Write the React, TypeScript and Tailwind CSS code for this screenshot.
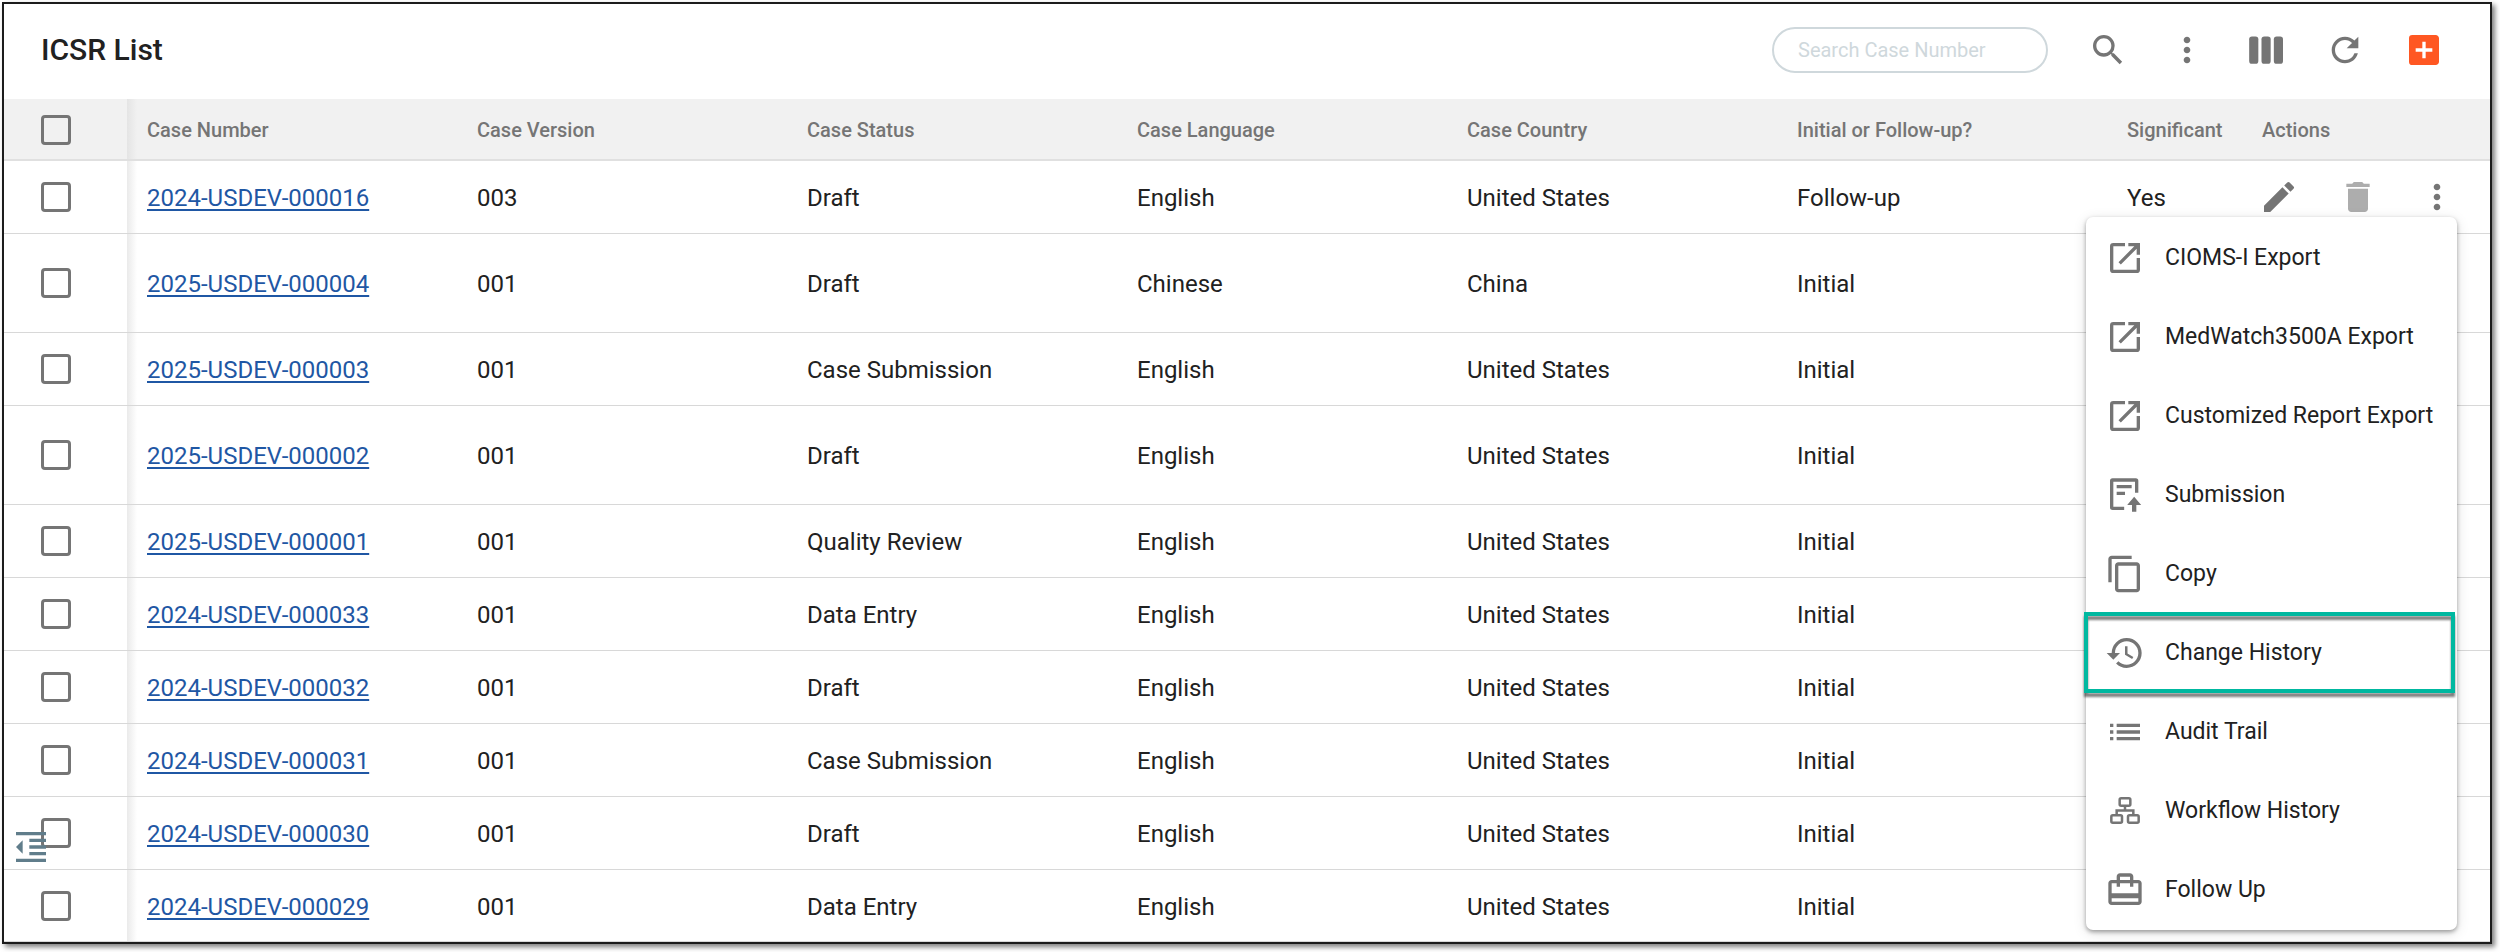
import type { ReactNode } from "react";
import type { IconType } from "react-icons";
import {
  MdAddBox,
  MdCardTravel,
  MdContentCopy,
  MdDelete,
  MdEdit,
  MdFormatIndentDecrease,
  MdHistory,
  MdList,
  MdMoreVert,
  MdRefresh,
  MdSearch,
} from "react-icons/md";

type CaseRow = {
  number: string;
  version: string;
  status: string;
  language: string;
  country: string;
  kind: string;
  height: string;
};

const US = "United States";

const rows: CaseRow[] = [
  { number: "2024-USDEV-000016", version: "003", status: "Draft", language: "English", country: US, kind: "Follow-up", height: "h-[73px]" },
  { number: "2025-USDEV-000004", version: "001", status: "Draft", language: "Chinese", country: "China", kind: "Initial", height: "h-[99px]" },
  { number: "2025-USDEV-000003", version: "001", status: "Case Submission", language: "English", country: US, kind: "Initial", height: "h-[73px]" },
  { number: "2025-USDEV-000002", version: "001", status: "Draft", language: "English", country: US, kind: "Initial", height: "h-[99px]" },
  { number: "2025-USDEV-000001", version: "001", status: "Quality Review", language: "English", country: US, kind: "Initial", height: "h-[73px]" },
  { number: "2024-USDEV-000033", version: "001", status: "Data Entry", language: "English", country: US, kind: "Initial", height: "h-[73px]" },
  { number: "2024-USDEV-000032", version: "001", status: "Draft", language: "English", country: US, kind: "Initial", height: "h-[73px]" },
  { number: "2024-USDEV-000031", version: "001", status: "Case Submission", language: "English", country: US, kind: "Initial", height: "h-[73px]" },
  { number: "2024-USDEV-000030", version: "001", status: "Draft", language: "English", country: US, kind: "Initial", height: "h-[73px]" },
  { number: "2024-USDEV-000029", version: "001", status: "Data Entry", language: "English", country: US, kind: "Initial", height: "h-[72px]" },
];

const headings = ["Case Number", "Case Version", "Case Status", "Case Language", "Case Country", "Initial or Follow-up?"];

function Svg({ className, children }: { className?: string; children: ReactNode }) {
  return (
    <svg viewBox="0 0 24 24" fill="currentColor" aria-hidden="true" className={className}>
      {children}
    </svg>
  );
}

const OpenIcon = ({ className }: { className?: string }) => (
  <Svg className={className}>
    <path d="M12 3H5a2 2 0 0 0-2 2v14a2 2 0 0 0 2 2h14a2 2 0 0 0 2-2v-7h-2v7H5V5h7V3z" />
    <path d="M14 3v2h3.600l-9.500 9.500 1.400 1.400L19 6.400V10h2V3h-7z" />
  </Svg>
);

const ColumnsIcon = ({ className }: { className?: string }) => (
  <Svg className={className}>
    <rect x="1.900" y="3.900" width="5.500" height="16.400" rx="1.700" />
    <rect x="9.300" y="3.900" width="5.500" height="16.400" rx="1.700" />
    <rect x="16.700" y="3.900" width="5.500" height="16.400" rx="1.700" />
  </Svg>
);

const SubmissionIcon = ({ className }: { className?: string }) => (
  <Svg className={className}>
    <path d="M4.500 2A1.500 1.500 0 0 0 3 3.500v16A1.500 1.500 0 0 0 4.500 21h7v-2H5V4h13v6.600h2V3.500A1.500 1.500 0 0 0 18.500 2z" />
    <path d="M7 6h9v2H7zM7 10h5v2H7zM17.500 13l-4.200 5h2.900v4h2.600v-4h2.900z" />
  </Svg>
);

const WorkflowIcon = ({ className }: { className?: string }) => (
  <svg viewBox="0 0 24 24" fill="none" stroke="currentColor" strokeWidth="1.500" aria-hidden="true" className={className}>
    <rect x="8.800" y="4.300" width="6.400" height="4.500" rx="0.900" />
    <rect x="3.800" y="14.500" width="6.400" height="4.500" rx="0.900" />
    <rect x="13.800" y="14.500" width="6.400" height="4.500" rx="0.900" />
    <path d="M12 8.800v2.900M7 14.500v-2.800h10v2.800" />
  </svg>
);

type Icon = IconType | typeof OpenIcon;

const menuItems: { label: string; Icon: Icon; highlighted?: boolean }[] = [
  { label: "CIOMS-I Export", Icon: OpenIcon },
  { label: "MedWatch3500A Export", Icon: OpenIcon },
  { label: "Customized Report Export", Icon: OpenIcon },
  { label: "Submission", Icon: SubmissionIcon },
  { label: "Copy", Icon: MdContentCopy },
  { label: "Change History", Icon: MdHistory, highlighted: true },
  { label: "Audit Trail", Icon: MdList },
  { label: "Workflow History", Icon: WorkflowIcon },
  { label: "Follow Up", Icon: MdCardTravel },
];

const tools: { label: string; Icon: Icon; color: string }[] = [
  { label: "Search", Icon: MdSearch, color: "text-[#757575]" },
  { label: "More options", Icon: MdMoreVert, color: "text-[#757575]" },
  { label: "Columns", Icon: ColumnsIcon, color: "text-[#757575]" },
  { label: "Refresh", Icon: MdRefresh, color: "text-[#757575]" },
  { label: "Add case", Icon: MdAddBox, color: "text-[#ff5722]" },
];

function Checkbox({ label }: { label: string }) {
  return (
    <input
      type="checkbox"
      aria-label={label}
      className="ml-[37px] block size-[30px] appearance-none rounded-[4px] border-3 border-[#757575] checked:bg-[#757575]"
    />
  );
}

function ActionMenu() {
  return (
    <ul role="menu" className="absolute top-full right-0 z-10 w-[371px] rounded-[7px] bg-white py-px text-[23px] shadow-[0_2px_4px_rgba(0,0,0,0.35),0_3px_14px_rgba(0,0,0,0.12)]">
      {menuItems.map(({ label, Icon, highlighted }) => (
        <li key={label} role="none" className="relative">
          <button type="button" role="menuitem" className="flex h-[79px] w-full items-center gap-5 pl-[19px] whitespace-nowrap">
            <Icon className="size-10 shrink-0 text-[#757575]" />
            {label}
          </button>
          {highlighted && (
            <span className="pointer-events-none absolute -inset-y-px right-0.5 -left-0.5 border-4 border-[#00b8a0] drop-shadow-[0_4px_1px_rgba(0,0,0,0.5)]" />
          )}
        </li>
      ))}
    </ul>
  );
}

function RowActions() {
  return (
    <div className="flex items-center gap-[39px]">
      <button type="button" aria-label="Edit">
        <MdEdit className="size-10 text-[#757575]" />
      </button>
      <button type="button" aria-label="Delete">
        <MdDelete className="size-10 text-[#adadad]" />
      </button>
      <div className="relative">
        <button type="button" aria-label="More actions" aria-expanded="true" className="block">
          <MdMoreVert className="size-10 text-[#757575]" />
        </button>
        <ActionMenu />
      </div>
    </div>
  );
}

const edge = "bg-linear-to-r from-[#eaeaea] to-transparent bg-[length:10px_100%] bg-no-repeat";
const headEdge = "bg-linear-to-r from-[#e4e4e4] to-transparent bg-[length:10px_100%] bg-no-repeat";

export default function App() {
  return (
    <div className="bg-white pt-0.5 pr-2 pb-2 pl-0.5 font-[Roboto,sans-serif] text-[24px] leading-7 text-[#212121]">
      <main className="relative border-2 border-[#1c1c1c] bg-white shadow-[3px_3px_5px_rgba(0,0,0,0.5)]">
        <header className="flex h-[95px] items-center pr-[27px] pb-1 pl-[37px]">
          <h1 className="mr-auto text-[30px] leading-9 font-medium">ICSR List</h1>
          <input
            type="search"
            aria-label="Search Case Number"
            placeholder="Search Case Number"
            className="mr-5 h-[46px] w-[276px] rounded-full border-2 border-[#cfd8dc] px-6 text-[20px] placeholder:text-[#cfd8dc]"
          />
          {tools.map(({ label, Icon, color }) => (
            <button key={label} type="button" aria-label={label} className="flex w-[79px] justify-center">
              <Icon className={`size-10 ${color}`} />
            </button>
          ))}
        </header>

        <table className="w-full table-fixed border-separate border-spacing-0 text-left">
          <colgroup>
            <col className="w-[123px]" />
            {headings.map((h) => (
              <col key={h} />
            ))}
            <col className="w-[135px]" />
            <col className="w-[248px]" />
          </colgroup>
          <thead className="bg-[#f1f1f1] text-[20px] text-[#757575]">
            <tr className="h-[62px] *:border-b-2 *:border-[#e0e0e0] *:p-0 *:pt-0.5 *:font-medium">
              <th>
                <Checkbox label="Select all cases" />
              </th>
              {headings.map((h, i) => (
                <th key={h} className={i === 0 ? headEdge : ""}>
                  <span className="pl-5">{h}</span>
                </th>
              ))}
              <th>
                <span className="pl-5">Significant</span>
              </th>
              <th>
                <span className="pl-5">Actions</span>
              </th>
            </tr>
          </thead>
          <tbody>
            {rows.map((r, i) => (
              <tr key={r.number} className={`${r.height} *:border-b *:border-[#d8d8d8]`}>
                <td>
                  <Checkbox label={`Select ${r.number}`} />
                </td>
                <td className={`pt-0.5 ${edge}`}>
                  <a href="#case" className="ml-5 text-[#1f57a4] underline decoration-2 underline-offset-3">
                    {r.number}
                  </a>
                </td>
                {[r.version, r.status, r.language, r.country, r.kind].map((v, c) => (
                  <td key={c} className="pt-0.5">
                    <span className="pl-5">{v}</span>
                  </td>
                ))}
                <td className="pt-0.5">{i === 0 && <span className="pl-5">Yes</span>}</td>
                <td>
                  {i === 0 && (
                    <div className="pl-[17px]">
                      <RowActions />
                    </div>
                  )}
                </td>
              </tr>
            ))}
          </tbody>
        </table>

        <button type="button" aria-label="Collapse panel" className="absolute bottom-[75px] left-[7px]">
          <MdFormatIndentDecrease className="size-10 text-[#607d8b]" />
        </button>
      </main>
    </div>
  );
}
